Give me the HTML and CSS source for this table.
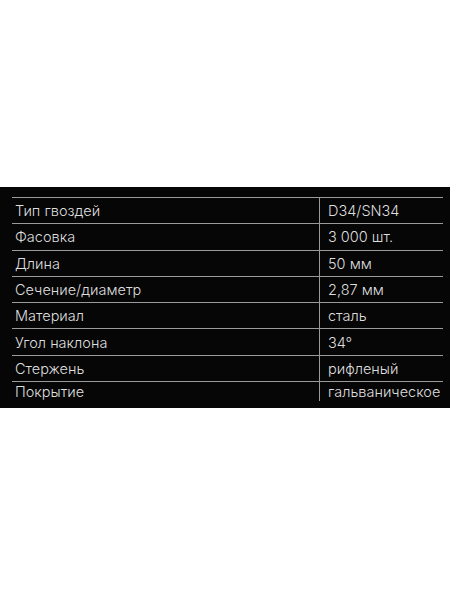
FILE: index.html
```html
<!DOCTYPE html>
<html lang="ru">
<head>
<meta charset="utf-8">
<link rel="stylesheet" href="styles.css">
</head>
<body>
<div class="band">
  <div class="table">
    <div class="row"><div class="k">Тип гвоздей</div><div class="v">D34/SN34</div></div>
    <div class="row"><div class="k">Фасовка</div><div class="v">3 000 шт.</div></div>
    <div class="row"><div class="k">Длина</div><div class="v">50 мм</div></div>
    <div class="row"><div class="k">Сечение/диаметр</div><div class="v">2,87 мм</div></div>
    <div class="row"><div class="k">Материал</div><div class="v">сталь</div></div>
    <div class="row"><div class="k">Угол наклона</div><div class="v">34°</div></div>
    <div class="row"><div class="k">Стержень</div><div class="v">рифленый</div></div>
    <div class="row last"><div class="k">Покрытие</div><div class="v">гальваническое</div></div>
  </div>
</div>
</body>
</html>
```
FILE: styles.css
```css
html, body {
  margin: 0;
  padding: 0;
  background: #ffffff;
  width: 450px;
  height: 600px;
  overflow: hidden;
}
.band {
  margin-top: 187px;
  height: 221px;
  background: #060606;
  padding: 10px 7px 0 12px;
  box-sizing: border-box;
  font-family: Inter, "Noto Sans", sans-serif;
  font-size: 14.5px;
  font-weight: 300;
  color: #dedede;
}
.table {
  display: flex;
  flex-direction: column;
}
.row {
  display: grid;
  grid-template-columns: 307px 1fr;
  height: 26.3px;
  box-sizing: border-box;
  border-top: 1px solid #9a9a9a;
}
.row.last {
  height: 20px;
}
.k, .v {
  display: flex;
  align-items: center;
  height: 25.3px;
  white-space: nowrap;
}
.k {
  padding-left: 3px;
}
.v {
  padding-left: 8px;
  border-left: 1px solid #9a9a9a;
}
.row.last .v {
  height: 19px;
  align-items: flex-start;
}
.row.last .k {
  align-items: flex-start;
}
.row.last .k, .row.last .v {
  padding-top: 1px;
  box-sizing: border-box;
}
```
